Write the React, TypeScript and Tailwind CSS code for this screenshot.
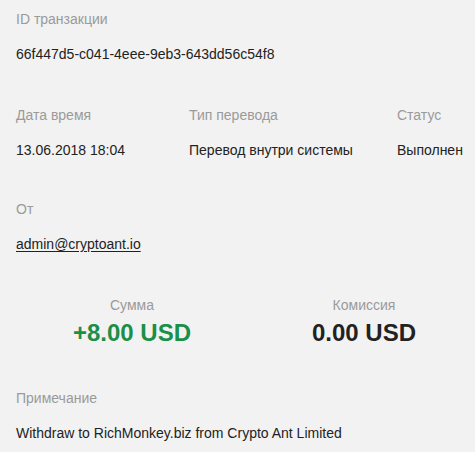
const label = "text-[14px] leading-5 text-[#9a9a9a]";
const value = "mt-[15px] text-[14px] leading-5 text-[#222]";

export default function App() {
  return (
    <div className="min-h-[452px] w-[475px] bg-[#f2f2f2] px-4 pt-[9px] font-['Liberation_Sans',Arial,sans-serif]">
      <div className="mb-[41px]">
        <div className={label}>ID транзакции</div>
        <div className={value}>66f447d5-c041-4eee-9eb3-643dd56c54f8</div>
      </div>

      <div className="mb-[39px] flex">
        <div className="w-[173px] shrink-0">
          <div className={label}>Дата время</div>
          <div className={value}>13.06.2018 18:04</div>
        </div>
        <div className="w-[208px] shrink-0">
          <div className={label}>Тип перевода</div>
          <div className={value}>Перевод внутри системы</div>
        </div>
        <div className="shrink-0">
          <div className={label}>Статус</div>
          <div className={value}>Выполнен</div>
        </div>
      </div>

      <div className="mb-[41px]">
        <div className={label}>От</div>
        <div className={value}>
          <a href="#" className="underline underline-offset-2">admin@cryptoant.io</a>
        </div>
      </div>

      <div className="mb-[41px] flex">
        <div className="w-[232px] shrink-0 text-center">
          <div className={label}>Сумма</div>
          <div className="mt-1 text-[24px] font-bold leading-7 text-[#1a8f48]">+8.00 USD</div>
        </div>
        <div className="w-[232px] shrink-0 text-center">
          <div className={label}>Комиссия</div>
          <div className="mt-1 text-[24px] font-bold leading-7 text-[#222]">0.00 USD</div>
        </div>
      </div>

      <div>
        <div className={label}>Примечание</div>
        <div className={value}>Withdraw to RichMonkey.biz from Crypto Ant Limited</div>
      </div>
    </div>
  );
}
